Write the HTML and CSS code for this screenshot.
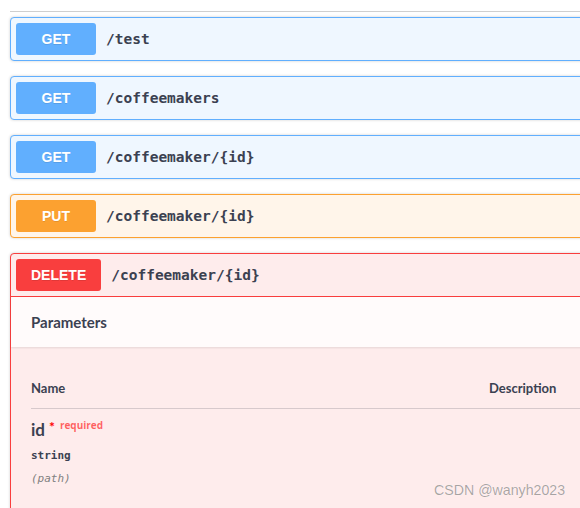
FILE: index.html
```html
<!DOCTYPE html>
<html>
<head>
<meta charset="utf-8">
<link rel="stylesheet" href="styles.css">
</head>
<body>
<div class="page">
  <div class="tag-line"></div>
  <div class="opblock get">
    <div class="summary"><span class="method">GET</span><span class="path">/test</span></div>
  </div>
  <div class="opblock get">
    <div class="summary"><span class="method">GET</span><span class="path">/coffeemakers</span></div>
  </div>
  <div class="opblock get">
    <div class="summary"><span class="method">GET</span><span class="path">/coffeemaker/{id}</span></div>
  </div>
  <div class="opblock put">
    <div class="summary"><span class="method">PUT</span><span class="path">/coffeemaker/{id}</span></div>
  </div>
  <div class="opblock delete open">
    <div class="summary"><span class="method">DELETE</span><span class="path">/coffeemaker/{id}</span></div>
    <div class="section-header"><h4>Parameters</h4></div>
    <div class="table-container">
      <div class="params">
        <div class="th">Name</div>
        <div class="th">Description</div>
        <div class="td name-cell">
          <div class="param-name">id<span class="star">*</span><span class="req">required</span></div>
          <div class="param-type">string</div>
          <div class="param-in">(path)</div>
        </div>
        <div class="td"></div>
      </div>
    </div>
  </div>
</div>
<div class="watermark">CSDN @wanyh2023</div>
</body>
</html>
```

FILE: styles.css
```css
html, body {
  margin: 0;
  padding: 0;
  overflow: hidden;
  background: #fff;
  height: 508px;
}
.page {
  padding: 11px 0 0 10px;
  width: 620px;
}
.tag-line {
  height: 1px;
  background: #cfcfcf;
  margin-bottom: 5px;
}
.opblock {
  border: 1px solid;
  border-radius: 4px;
  box-shadow: 0 0 3px rgba(0,0,0,.19);
  margin-bottom: 15px;
}
.summary {
  display: flex;
  align-items: center;
  padding: 5px;
}
.method {
  min-width: 80px;
  box-sizing: border-box;
  height: 32px;
  padding: 0 15px;
  border-radius: 3px;
  color: #fff;
  font: bold 14px "Liberation Sans", Arial, sans-serif;
  text-shadow: 0 1px 0 rgba(0,0,0,.1);
  display: flex;
  align-items: center;
  justify-content: center;
}
.path {
  padding: 0 10px;
  font: bold 14.5px "DejaVu Sans Mono", monospace;
  color: #3b4151;
}
.get { border-color: #61affe; background: #eff7ff; }
.get .method { background: #61affe; }
.put { border-color: #fca130; background: #fff5ea; }
.put .method { background: #fca130; }
.delete { border-color: #f93e3e; background: #feecec; height: 400px; }
.delete .method { background: #f93e3e; }
.open .summary { border-bottom: 1px solid #f93e3e; }
.section-header {
  height: 50px;
  box-sizing: border-box;
  padding: 0 20px;
  display: flex;
  align-items: center;
  background: rgba(255,255,255,.8);
  box-shadow: 0 1px 2px rgba(0,0,0,.1);
}
.section-header h4 {
  margin: 0;
  font: bold 15px Lato, "Open Sans", sans-serif;
  color: #3b4151;
}
.table-container {
  padding: 22px 20px 20px;
}
.params {
  display: grid;
  grid-template-columns: 458px 1fr;
}
.th {
  padding: 12px 0;
  font: bold 13px Lato, "Open Sans", sans-serif;
  line-height: 15px;
  color: #3b4151;
  border-bottom: 1px solid rgba(59,65,81,.2);
}
.td {
  padding: 10px 0;
}
.param-name {
  font: bold 17px Lato, "Open Sans", sans-serif;
  color: #3b4151;
  line-height: 22px;
}
.star {
  color: red;
  font-size: 14px;
  position: relative;
  top: -4px;
  margin-left: 4px;
}
.req {
  font: bold 10px "Open Sans", sans-serif;
  color: rgba(255,0,0,.6);
  position: relative;
  top: -7px;
  margin-left: 5px;
}
.param-type {
  font: bold 11px "DejaVu Sans Mono", monospace;
  color: #3b4151;
  padding: 6px 0 0;
  line-height: 16px;
}
.param-in {
  font: italic 11px "DejaVu Sans Mono", monospace;
  color: #808080;
  padding-top: 7px;
  line-height: 16px;
}
.watermark {
  position: absolute;
  left: 434px;
  top: 482px;
  font: 14.2px "Liberation Sans", Arial, sans-serif;
  color: rgba(0,0,0,.35);
  text-shadow: 0 0 1px rgba(255,255,255,.8);
}
```
